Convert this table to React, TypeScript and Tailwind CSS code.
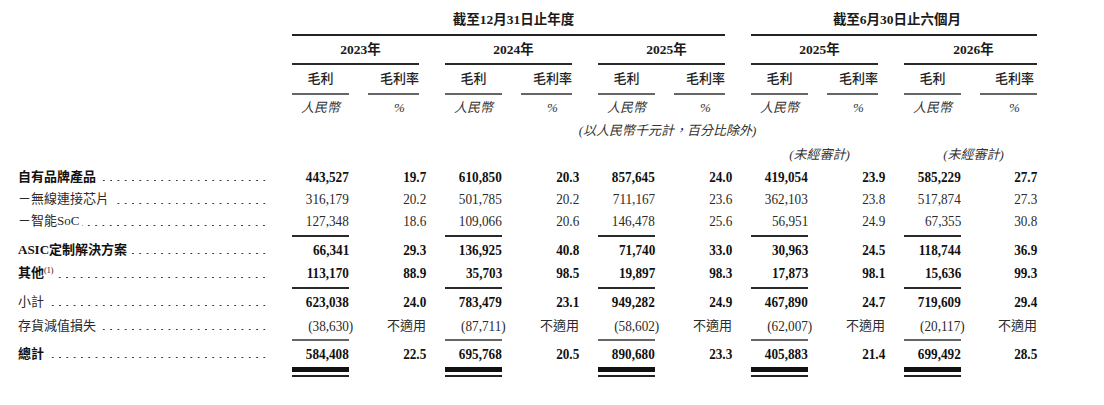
import React from 'react';

type RowDef = {
  label: React.ReactNode;
  labelBold: boolean;
  numBold: boolean;
  m: string[];
  p: string[];
  h: string;
};

const GROUPS = [0, 1, 2, 3, 4];

function Groups({
  m,
  p,
}: {
  m: (g: number) => React.ReactNode;
  p: (g: number) => React.ReactNode;
}) {
  return (
    <div className="ml-[20px] flex h-full">
      {GROUPS.map((g) => (
        <div key={g} className={g === 0 ? 'flex h-full' : 'ml-[26px] flex h-full'}>
          <div className="h-full w-[57px]">{m(g)}</div>
          <div className={g === 4 ? 'ml-[19px] h-full w-[57px]' : 'ml-[19px] h-full w-[51px]'}>{p(g)}</div>
        </div>
      ))}
    </div>
  );
}

function Num({ v, bold, pct, last }: { v: string; bold: boolean; pct: boolean; last: boolean }) {
  if (v === '不適用') {
    return (
      <div className="flex h-full items-center justify-end">
        <span className={last ? 'text-[13px] leading-[18px] text-[#2a2a2a]' : '-mr-[7px] text-[13px] leading-[18px] text-[#2a2a2a]'}>
          {v}
        </span>
      </div>
    );
  }
  const neg = v.startsWith('(');
  let mr = '';
  if (pct && !last) mr = '-mr-[7px]';
  if (neg) mr = '-mr-[4px]';
  return (
    <div className="flex h-full items-center justify-end">
      <span
        className={`inline-block origin-right scale-x-[0.88] text-[15px] leading-[18px] ${
          bold ? 'font-bold text-[#111]' : 'font-normal text-[#2a2a2a]'
        } ${mr}`}
      >
        {v}
      </span>
    </div>
  );
}

function Label({ children, bold }: { children: React.ReactNode; bold: boolean }) {
  return (
    <div className="flex h-full w-[254px] items-center">
      <span
        className={`whitespace-nowrap text-[13px] leading-[18px] ${
          bold ? 'font-bold text-[#111]' : 'font-normal text-[#2a2a2a]'
        }`}
      >
        {children}
      </span>
      <div className="ml-[3px] mr-[4px] mt-[8px] h-[3px] min-w-0 flex-1 bg-[radial-gradient(circle,#3a3a3a_0.7px,transparent_1.1px)] bg-[length:7.3px_3px] bg-right bg-repeat-x" />
    </div>
  );
}

const rows: (RowDef | { rule: string; color: string })[] = [
  {
    label: '自有品牌產品',
    labelBold: true,
    numBold: true,
    m: ['443,527', '610,850', '857,645', '419,054', '585,229'],
    p: ['19.7', '20.3', '24.0', '23.9', '27.7'],
    h: 'h-[23px]',
  },
  {
    label: '－無線連接芯片',
    labelBold: false,
    numBold: false,
    m: ['316,179', '501,785', '711,167', '362,103', '517,874'],
    p: ['20.2', '20.2', '23.6', '23.8', '27.3'],
    h: 'h-[22px]',
  },
  {
    label: '－智能SoC ',
    labelBold: false,
    numBold: false,
    m: ['127,348', '109,066', '146,478', '56,951', '67,355'],
    p: ['18.6', '20.6', '25.6', '24.9', '30.8'],
    h: 'h-[22px]',
  },
  { rule: 'h-[5px]', color: 'border-[#2a2a2a]' },
  {
    label: 'ASIC定制解決方案 ',
    labelBold: true,
    numBold: true,
    m: ['66,341', '136,925', '71,740', '30,963', '118,744'],
    p: ['29.3', '40.8', '33.0', '24.5', '36.9'],
    h: 'h-[25px]',
  },
  {
    label: (
      <>
        其他<sup className="text-[8px] font-normal">(1)</sup>{' '}
      </>
    ),
    labelBold: true,
    numBold: true,
    m: ['113,170', '35,703', '19,897', '17,873', '15,636'],
    p: ['88.9', '98.5', '98.3', '98.1', '99.3'],
    h: 'h-[22px]',
  },
  { rule: 'h-[5px]', color: 'border-[#2a2a2a]' },
  {
    label: '小計',
    labelBold: false,
    numBold: true,
    m: ['623,038', '783,479', '949,282', '467,890', '719,609'],
    p: ['24.0', '23.1', '24.9', '24.7', '29.4'],
    h: 'h-[25px]',
  },
  {
    label: '存貨減值損失',
    labelBold: false,
    numBold: false,
    m: ['(38,630)', '(87,711)', '(58,602)', '(62,007)', '(20,117)'],
    p: ['不適用', '不適用', '不適用', '不適用', '不適用'],
    h: 'h-[23px]',
  },
  { rule: 'h-[4px]', color: 'border-[#666]' },
  {
    label: '總計',
    labelBold: true,
    numBold: true,
    m: ['584,408', '695,768', '890,680', '405,883', '699,492'],
    p: ['22.5', '20.5', '23.3', '21.4', '28.5'],
    h: 'h-[25px]',
  },
];

export default function App() {
  return (
    <div className="h-[405px] w-[1104px] overflow-hidden bg-white font-['Liberation_Serif','Noto_Sans_CJK_TC',serif] text-[#1a1a1a]">
      <div className="pl-[18px]">
        {/* Title row */}
        <div className="flex h-[36px]">
          <div className="w-[254px]" />
          <div className="ml-[20px] flex h-full w-[433px] items-end justify-center border-b-2 border-[#222] pb-[5px] pl-[10px]">
            <span className="text-[13.5px] font-bold leading-[18px]">截至12月31日止年度</span>
          </div>
          <div className="ml-[26px] flex h-full w-[286px] items-end justify-center border-b-2 border-[#222] pb-[5px] pl-[6px]">
            <span className="text-[13.5px] font-bold leading-[18px]">截至6月30日止六個月</span>
          </div>
        </div>

        {/* Year row */}
        <div className="flex h-[29px]">
          <div className="w-[254px]" />
          <div className="ml-[20px] flex h-full">
            {['2023年', '2024年', '2025年', '2025年', '2026年'].map((y, g) => (
              <div
                key={g}
                className={
                  g === 0
                    ? 'flex h-full w-[127px] items-center justify-center border-b-2 border-[#2a2a2a] pl-[10px]'
                    : g === 4
                    ? 'ml-[26px] flex h-full w-[133px] items-center justify-center border-b-2 border-[#2a2a2a] pl-[6px]'
                    : 'ml-[26px] flex h-full w-[127px] items-center justify-center border-b-2 border-[#2a2a2a] pl-[10px]'
                }
              >
                <span className="text-[13.5px] font-bold leading-[18px]">{y}</span>
              </div>
            ))}
          </div>
        </div>

        {/* 毛利 / 毛利率 row */}
        <div className="flex h-[30px]">
          <div className="w-[254px]" />
          <Groups
            m={() => (
              <div className="flex h-full items-center justify-center border-b-2 border-[#666]">
                <span className="text-[13px] font-medium leading-[18px] text-[#222]">毛利</span>
              </div>
            )}
            p={() => (
              <div className="flex h-full items-center justify-center border-b-2 border-[#666] pl-[12px]">
                <span className="whitespace-nowrap text-[13px] font-medium leading-[18px] text-[#222]">毛利率</span>
              </div>
            )}
          />
        </div>

        {/* 人民幣 / % row */}
        <div className="flex h-[25px]">
          <div className="w-[254px]" />
          <Groups
            m={() => (
              <div className="flex h-full items-center justify-center">
                <span className="text-[13px] italic leading-[18px] text-[#333]">人民幣</span>
              </div>
            )}
            p={() => (
              <div className="flex h-full items-center justify-center pl-[12px]">
                <span className="text-[13px] italic leading-[18px] text-[#333]">%</span>
              </div>
            )}
          />
        </div>

        {/* 以人民幣千元計 */}
        <div className="flex h-[21px]">
          <div className="w-[254px]" />
          <div className="ml-[20px] flex h-full w-[745px] items-center justify-center pl-[6px]">
            <span className="text-[13px] italic leading-[18px] text-[#333]">(以人民幣千元計，百分比除外)</span>
          </div>
        </div>

        {/* 未經審計 */}
        <div className="flex h-[24px]">
          <div className="w-[254px]" />
          <div className="ml-[479px] flex h-full w-[127px] items-end justify-center pb-[1px] pl-[10px]">
            <span className="text-[13px] italic leading-[18px] text-[#333]">(未經審計)</span>
          </div>
          <div className="ml-[26px] flex h-full w-[133px] items-end justify-center pb-[1px] pl-[6px]">
            <span className="text-[13px] italic leading-[18px] text-[#333]">(未經審計)</span>
          </div>
        </div>

        {/* Data rows */}
        {rows.map((r, i) => {
          if ('rule' in r) {
            return (
              <div key={i} className={`flex ${r.rule}`}>
                <div className="w-[254px]" />
                <Groups m={() => <div className={`h-full border-b-2 ${r.color}`} />} p={() => null} />
              </div>
            );
          }
          return (
            <div key={i} className={`flex ${r.h}`}>
              <Label bold={r.labelBold}>{r.label}</Label>
              <Groups
                m={(g) => <Num v={r.m[g]} bold={r.numBold} pct={false} last={g === 4} />}
                p={(g) => <Num v={r.p[g]} bold={r.numBold} pct={true} last={g === 4} />}
              />
            </div>
          );
        })}

        {/* Double rule */}
        <div className="mt-[1px] flex">
          <div className="w-[254px]" />
          <Groups
            m={() => (
              <div className="flex flex-col">
                <div className="h-[5px] bg-[#111]" />
                <div className="mt-[3px] h-[2px] bg-[#222]" />
              </div>
            )}
            p={() => null}
          />
        </div>
      </div>
    </div>
  );
}
